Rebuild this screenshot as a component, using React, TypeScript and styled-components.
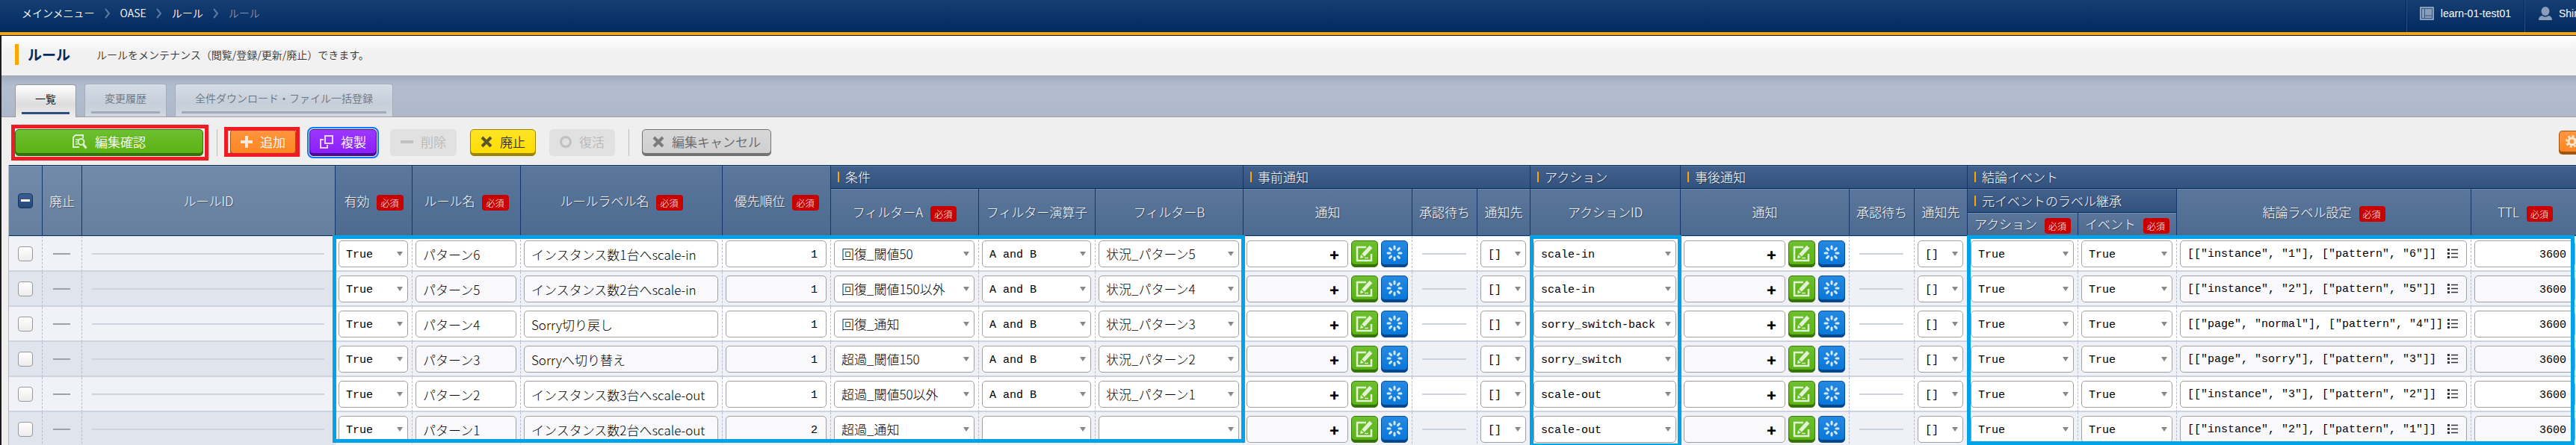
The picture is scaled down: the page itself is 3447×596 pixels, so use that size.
import React from "react";
import styled, { createGlobalStyle, css } from "styled-components";

const GlobalStyle = createGlobalStyle`
  * { box-sizing: border-box; }
  html, body { margin: 0; height: 100%; }
  body {
    overflow: hidden;
    background: #efefef;
    color: #000;
    font-family: "Noto Sans CJK JP", sans-serif;
    font-size: 14px;
    font-weight: 350;
  }
  button, input, select { font-family: inherit; font-weight: inherit; margin: 0; }
`;

const MONO = `"Liberation Mono", "Noto Sans CJK JP", monospace`;
const ACCENT = "#ffa500";

/* ---------- Header ---------- */

const Page = styled.div`
  height: 100vh;
  overflow: hidden;
  display: flex;
  flex-direction: column;
`;

const TopBar = styled.header`
  flex: none;
  display: flex;
  justify-content: space-between;
  height: 48px;
  border-bottom: 1px solid #111;
  background: linear-gradient(#163e72, #002b62 42px, #002b62 43px, ${ACCENT} 43px);
  color: #fff;
`;

const Breadcrumb = styled.nav`
  display: flex;
  align-items: center;
  gap: 12px;
  height: 33px;
  padding-left: 29px;
  line-height: 20px;
  svg { display: block; margin-top: 3px; }
`;

const Crumb = styled.a<{ $current?: boolean }>`
  color: ${(p) => (p.$current ? "#8395b0" : "#fff")};
  text-decoration: none;
`;

const Account = styled.div`
  display: flex;
  height: 43px;
`;

const AccountItem = styled.button<{ $cut?: boolean }>`
  display: flex;
  gap: 8px;
  padding: 8px 18px 0 17px;
  ${(p) => p.$cut && "width: 69px; padding-right: 0;"}
  overflow: hidden;
  white-space: nowrap;
  border: 0;
  border-left: 1px solid #2a4f80;
  box-shadow: -1px 0 #00265a;
  background: none;
  color: #fff;
  font-family: "Liberation Sans", sans-serif;
  font-size: 14px;
  line-height: 20px;
  svg { flex: none; }
`;

const Main = styled.main`
  flex: 1;
  min-height: 0;
  display: flex;
  flex-direction: column;
  border-left: 2px solid #1c1c1c;
`;

const TitleRow = styled.div`
  flex: none;
  display: flex;
  align-items: center;
  height: 53px;
  padding: 0 18px 3px;
  background: linear-gradient(#fff, #f1f1f1 22px);
`;

const Title = styled.h1`
  margin: 0 35px 0 0;
  padding-left: 12px;
  border-left: 5px solid ${ACCENT};
  color: #002b62;
  font-size: 19px;
  line-height: 28px;
`;

const Description = styled.p`
  margin: 0;
  color: #333;
  line-height: 28px;
`;

const Tabs = styled.div`
  flex: none;
  display: flex;
  align-items: flex-end;
  gap: 11px;
  height: 56px;
  padding-left: 18px;
  border-bottom: 1px solid #9b9f9f;
  background: linear-gradient(#9fabbb, #b3bdd0 14px, #adb9cb);
`;

const Tab = styled.button<{ $active?: boolean }>`
  height: 44px;
  padding: 0 8px 3px;
  border: 1px solid #a3adba;
  border-bottom: 0;
  border-radius: 4px 4px 0 0;
  background: linear-gradient(#d6dde7, #c6ced9 60%, #d2d8e1);
  color: #6c737d;
  font-size: 14px;
  line-height: 20px;
  span {
    display: block;
    padding: 6px 18px 8px;
    border-bottom: 3px solid #a1abba;
  }
  ${(p) =>
    p.$active &&
    css`
      margin-bottom: -1px;
      border-color: #999;
      background: linear-gradient(#fff, #dcdcdc 60%, #efefef);
      color: #000;
      span { border-color: #2d4f80; }
    `}
`;

/* ---------- Toolbar ---------- */

const Toolbar = styled.div`
  flex: none;
  display: flex;
  align-items: center;
  gap: 18px;
  height: 64px;
  padding: 4px 0 0 18px;
`;

const Divider = styled.span`
  width: 1px;
  height: 36px;
  margin: 0 -1px 0 0;
  background: #bbb;
`;

type Tone = "green" | "orange" | "purple" | "yellow" | "gray" | "disabled";

const tones: Record<Tone, [string, string, string, string]> = {
  green: ["#6dbf30", "#59b210", "#35700a", "#fff"],
  orange: ["#ff963f", "#ff8420", "#a1540f", "#fff"],
  purple: ["#9c38ff", "#8b1cff", "#4a0a94", "#fff"],
  yellow: ["#ffe426", "#ffdc00", "#9b8600", "#333"],
  gray: ["#d7d7d7", "#cfcfcf", "#737373", "#666"],
  disabled: ["#e1e1e1", "#e1e1e1", "#e1e1e1", "#b9b9b9"],
};

const ToolButton = styled.button<{ $tone: Tone; $wide?: boolean }>`
  flex: none;
  display: flex;
  align-items: center;
  justify-content: center;
  gap: 10px;
  width: ${(p) => (p.$wide ? "252px" : "auto")};
  height: 36px;
  padding: 0 13px 3px;
  border: 1px solid ${(p) => tones[p.$tone][2]};
  border-radius: 5px;
  background: linear-gradient(${(p) => tones[p.$tone][0]}, ${(p) => tones[p.$tone][1]});
  box-shadow: inset 0 -3px ${(p) => tones[p.$tone][2]};
  color: ${(p) => tones[p.$tone][3]};
  font-size: 17px;
  line-height: 24px;
  white-space: nowrap;
  svg { opacity: 0.8; flex: none; }
  ${(p) => p.$tone === "disabled" && "box-shadow: none;"}
`;

const FocusRing = styled.span`
  display: flex;
  border-radius: 5px;
  outline: 2px solid #0a78ff;
  outline-offset: 1px;
`;

const Marked = styled.span`
  position: relative;
  display: flex;
`;

/* Annotation frame drawn over the controls it points out. */
const Mark = styled.span<{ $inset: string }>`
  position: absolute;
  inset: ${(p) => p.$inset};
  border: 5px solid #ed1c24;
  pointer-events: none;
`;

const SettingsButton = styled(ToolButton)`
  justify-content: flex-start;
  width: 23px;
  height: 32px;
  margin-left: auto;
  padding: 0 0 3px 8px;
  border-right: 0;
  border-radius: 5px 0 0 5px;
  overflow: hidden;
`;

/* ---------- Table ---------- */

const TableArea = styled.div`
  position: relative;
  flex: 1;
  min-height: 0;
  overflow: hidden;
  margin-left: 9px;
  border-left: 1px solid #bbb;
`;

const Frame = styled.div<{ $left: number; $width: number; $height: number }>`
  position: absolute;
  top: 94px;
  left: ${(p) => p.$left}px;
  width: ${(p) => p.$width}px;
  height: ${(p) => p.$height}px;
  border: 5px solid #00a2e8;
  pointer-events: none;
`;

const Table = styled.table`
  width: 3440px;
  table-layout: fixed;
  border-collapse: separate;
  border-spacing: 0;
  border-top: 1px solid #002d62;
`;

const HeadRow = styled.tr<{ $height: number }>`
  height: ${(p) => p.$height}px;
`;

const HeadCell = styled.th<{ $pale?: boolean }>`
  padding: 0;
  border-right: 1px solid #12376c;
  border-bottom: 1px solid #002d62;
  background: ${(p) =>
    p.$pale ? "linear-gradient(#728ba9, #667f9f)" : "linear-gradient(#5b779b, #4d6a90)"};
  box-shadow: inset 0 1px rgba(255, 255, 255, 0.15);
  color: #fff;
  font-size: 17px;
  font-weight: 300;
  line-height: 24px;
  text-shadow: 1px 1px 1px rgba(0, 0, 0, 0.4);
  white-space: nowrap;
`;

const GroupCell = styled(HeadCell)`
  background: linear-gradient(#42618b, #33527e);
  text-align: left;
`;

const GroupLabel = styled.span`
  display: flex;
  align-items: center;
  gap: 8px;
  padding-left: 9px;
  &::before {
    content: "";
    width: 2px;
    height: 14px;
    background: ${ACCENT};
  }
`;

const HeadLabel = styled.span`
  display: flex;
  align-items: center;
  justify-content: center;
  gap: 10px;
`;

const Required = styled.span`
  margin-top: 5px;
  padding: 0 6px 0 5px;
  border-radius: 4px;
  background: #c80000;
  font-size: 12px;
  line-height: 21px;
  text-shadow: none;
`;

const Cell = styled.td<{ $fixed?: boolean }>`
  height: 47px;
  padding: 5px 5px 4px 4px;
  border-right: 1px dashed #b3bdd0;
  border-bottom: 2px solid #cdd4e0;
  background: ${(p) => (p.$fixed ? "#f0f2f7" : "#fff")};
`;

const BodyRow = styled.tr`
  &:first-child > td { height: 48px; border-top: 1px solid #cdd4e0; }
  &:nth-child(even) > td { background: #f0f1f6; }
  &:nth-child(even) > ${Cell}:nth-child(-n + 3) { background: #e0e5ed; }
`;

const CheckCell = styled(Cell)`
  padding: 0;
  text-align: center;
  vertical-align: middle;
`;

const Check = styled.input`
  appearance: none;
  display: block;
  width: 20px;
  height: 20px;
  margin: 0 auto;
  border: 1px solid #999;
  border-radius: 4px;
  background: linear-gradient(#fff, #ececec);
`;

const CheckAll = styled(Check)`
  border-color: #0f3468;
  background:
    linear-gradient(#fff, #fff) center / 12px 3px no-repeat,
    linear-gradient(#3b6090, #244878);
`;

const EmptyMark = styled.hr<{ $dark?: boolean }>`
  height: 2px;
  margin: 0 ${(p) => (p.$dark ? 10 : 9)}px;
  border: 0;
  background: ${(p) => (p.$dark ? "#9da1a8" : "#cdd4e0")};
`;

const field = css`
  display: block;
  width: 100%;
  height: 36px;
  border: 1px solid #a0a0a0;
  border-radius: 5px;
  background: #fff;
  color: #000;
`;

const fieldText = css<{ $ascii: boolean }>`
  font-family: ${(p) => (p.$ascii ? MONO : `"Noto Sans CJK JP", sans-serif`)};
  font-size: ${(p) => (p.$ascii ? 15 : 17)}px;
  font-weight: ${(p) => (p.$ascii ? 400 : 300)};
`;

const TextField = styled.input<{ $ascii: boolean; $right?: boolean }>`
  ${field}
  ${fieldText}
  padding: ${(p) => (p.$ascii ? 2 : 0)}px 11px 0 9px;
  text-align: ${(p) => (p.$right ? "right" : "left")};
  tr:nth-child(even) & { background: #f9f9fb; }
`;

const SelectBox = styled.span`
  position: relative;
  display: block;
  svg {
    position: absolute;
    top: 15px;
    right: 7px;
    pointer-events: none;
  }
`;

const SelectField = styled.select<{ $ascii: boolean }>`
  ${field}
  ${fieldText}
  appearance: none;
  padding: ${(p) => (p.$ascii ? "2px 18px 0 9px" : "0 18px 2px 9px")};
`;

const Notice = styled.div`
  display: flex;
  gap: 4px;
`;

const NoticeBox = styled.button`
  ${field}
  flex: 1;
  padding: 0 10px 0 0;
  font-family: Inter, sans-serif;
  font-size: 22px;
  font-weight: 700;
  line-height: 24px;
  text-align: right;
  tr:nth-child(even) & { background: #f9f9fb; }
`;

const IconButton = styled.button<{ $blue?: boolean }>`
  flex: none;
  display: flex;
  justify-content: center;
  width: 36px;
  height: 36px;
  padding: 4px 0 0;
  border: 1px solid ${(p) => (p.$blue ? "#0a4f96" : "#3a7a0c")};
  border-radius: 5px;
  background: ${(p) =>
    p.$blue ? "linear-gradient(#2589e2, #0676d8)" : "linear-gradient(#6dbf30, #59b210)"};
  box-shadow: inset 0 -3px ${(p) => (p.$blue ? "#04468a" : "#35700a")};
`;

const JsonBox = styled.div`
  ${field}
  display: flex;
  align-items: center;
  padding-right: 10px;
  tr:nth-child(even) & { background: #f9f9fb; }
  input {
    flex: 1;
    min-width: 0;
    padding: 0 0 0 9px;
    border: 0;
    background: none;
    font-family: ${MONO};
    font-size: 15px;
  }
`;

/* ---------- Icons ---------- */

const Chevron = () => (
  <svg width="10" height="14" viewBox="0 0 10 14" fill="none" stroke="#5f7aa0" strokeWidth="2">
    <path d="M2 1l5 6-5 6" />
  </svg>
);

const WorkspaceIcon = () => (
  <svg width="20" height="20" viewBox="0 0 20 20">
    <rect x="0" y="1" width="19" height="18" rx="1" fill="#8b9db8" />
    <path d="M2.500 3.500h14v13h-14zM6.500 3.500v13M6.500 13h10" fill="none" stroke="#335784" />
  </svg>
);

const UserIcon = () => (
  <svg width="20" height="20" viewBox="0 0 20 20" fill="#8b9db8">
    <ellipse cx="10" cy="7" rx="5.500" ry="6" />
    <path d="M1 19c0-4 2-5.500 5-6 2 2 6 2 8 0 3 .5 5 2 5 6z" />
  </svg>
);

const ConfirmIcon = () => (
  <svg width="20" height="20" viewBox="0 0 20 20" fill="none" stroke="#fff" strokeWidth="2">
    <path d="M14 5V1H4L1 4v13h8" />
    <path d="M4 7h4M4 10h2M4 13h3" strokeWidth="1.500" />
    <circle cx="11.500" cy="10" r="4" />
    <path d="M14.500 13.500l4 5" strokeWidth="3" />
  </svg>
);

const PlusIcon = () => (
  <svg width="16" height="16" viewBox="0 0 16 16" stroke="currentColor" strokeWidth="4">
    <path d="M8 0v16M0 8h16" />
  </svg>
);

const CopyIcon = () => (
  <svg width="18" height="18" viewBox="0 0 18 18" fill="none" stroke="#fff" strokeWidth="2">
    <path d="M7 1h10v10H7zM5 6H1v11h9v-4" />
  </svg>
);

const MinusIcon = () => (
  <svg width="17" height="16" viewBox="0 0 17 16" stroke="currentColor" strokeWidth="4">
    <path d="M0 8h17" />
  </svg>
);

const CrossIcon = () => (
  <svg width="16" height="16" viewBox="0 0 16 16" stroke="currentColor" strokeWidth="4">
    <path d="M2 2l12 12M14 2L2 14" />
  </svg>
);

const CircleIcon = () => (
  <svg width="16" height="16" viewBox="0 0 16 16" fill="none" stroke="currentColor" strokeWidth="3">
    <circle cx="8" cy="8" r="6.500" />
  </svg>
);

const GearIcon = () => (
  <svg width="17" height="17" viewBox="0 0 17 17" fill="none" stroke="#fff">
    <circle cx="8.500" cy="8.500" r="4.500" strokeWidth="3" />
    <circle cx="8.500" cy="8.500" r="7" strokeWidth="3" strokeDasharray="2.750 2.750" />
  </svg>
);

const ArrowIcon = () => (
  <svg width="8" height="6" viewBox="0 0 8 6" fill="#888">
    <path d="M0 0h8L4 6z" />
  </svg>
);

const EditIcon = () => (
  <svg width="24" height="24" viewBox="0 0 24 24" fill="none" stroke="#e2f3d5">
    <path d="M14 4H2v18h19v-9" strokeWidth="2.500" />
    <path d="M10 15L20.500 3.500" strokeWidth="5" />
    <path d="M6 19l1-5 4 4z" fill="#e2f3d5" stroke="none" />
    <path d="M12 18.500h5" strokeWidth="1.500" />
  </svg>
);

const SpinnerIcon = () => (
  <svg width="24" height="24" viewBox="0 0 24 24" stroke="#d5e9fb" strokeWidth="3" strokeLinecap="round">
    <path d="M12 3v3M12 18v3M3 12h3M18 12h3M5.600 5.600l2 2M16.400 16.400l2 2M5.600 18.400l2-2M16.400 7.600l2-2" />
  </svg>
);

const ListIcon = () => (
  <svg width="16" height="14" viewBox="0 0 16 14" stroke="#333" fill="#333">
    <path d="M6 1.500h9M6 6.500h9M6 11.500h9" strokeWidth="1.500" />
    <path d="M1 1.500h3M1 6.500h3M1 11.500h3" strokeWidth="3" />
  </svg>
);

/* ---------- Data ---------- */

const columnWidths = [
  45, 53, 339, 103, 145, 270, 145, 198, 156, 198, 226, 87, 71, 201, 226, 87, 71, 148, 132, 394, 145,
];

type Rule = {
  name: string;
  label: string;
  priority: string;
  filterA: string;
  operator: string;
  filterB: string;
  action: string;
  conclusion: string;
};

const rules: Rule[] = [
  { name: "パターン6", label: "インスタンス数1台へscale-in", priority: "1", filterA: "回復_閾値50", operator: "A and B", filterB: "状況_パターン5", action: "scale-in", conclusion: '[["instance", "1"], ["pattern", "6"]]' },
  { name: "パターン5", label: "インスタンス数2台へscale-in", priority: "1", filterA: "回復_閾値150以外", operator: "A and B", filterB: "状況_パターン4", action: "scale-in", conclusion: '[["instance", "2"], ["pattern", "5"]]' },
  { name: "パターン4", label: "Sorry切り戻し", priority: "1", filterA: "回復_通知", operator: "A and B", filterB: "状況_パターン3", action: "sorry_switch-back", conclusion: '[["page", "normal"], ["pattern", "4"]]' },
  { name: "パターン3", label: "Sorryへ切り替え", priority: "1", filterA: "超過_閾値150", operator: "A and B", filterB: "状況_パターン2", action: "sorry_switch", conclusion: '[["page", "sorry"], ["pattern", "3"]]' },
  { name: "パターン2", label: "インスタンス数3台へscale-out", priority: "1", filterA: "超過_閾値50以外", operator: "A and B", filterB: "状況_パターン1", action: "scale-out", conclusion: '[["instance", "3"], ["pattern", "2"]]' },
  { name: "パターン1", label: "インスタンス数2台へscale-out", priority: "2", filterA: "超過_通知", operator: "", filterB: "", action: "scale-out", conclusion: '[["instance", "2"], ["pattern", "1"]]' },
];

const isAscii = (s: string) => /^[\x20-\x7e]*$/.test(s);

/* ---------- Table parts ---------- */

const Head = (p: { text: string; required?: boolean; pale?: boolean; rows?: number }) => (
  <HeadCell scope="col" rowSpan={p.rows} $pale={p.pale}>
    <HeadLabel>
      {p.text}
      {p.required && <Required>必須</Required>}
    </HeadLabel>
  </HeadCell>
);

const Group = (p: { text: string; span: number }) => (
  <GroupCell scope="colgroup" colSpan={p.span}>
    <GroupLabel>{p.text}</GroupLabel>
  </GroupCell>
);

const SelectCell = (p: { label: string; value: string }) => (
  <Cell>
    <SelectBox>
      <SelectField aria-label={p.label} $ascii={isAscii(p.value)} defaultValue={p.value}>
        <option value={p.value}>{p.value}</option>
      </SelectField>
      <ArrowIcon />
    </SelectBox>
  </Cell>
);

const InputCell = (p: { label: string; value: string; right?: boolean }) => (
  <Cell>
    <TextField aria-label={p.label} $ascii={isAscii(p.value)} $right={p.right} defaultValue={p.value} />
  </Cell>
);

const NoticeCells = (p: { label: string }) => (
  <>
    <Cell>
      <Notice>
        <NoticeBox aria-label={`${p.label} 追加`}>+</NoticeBox>
        <IconButton aria-label={`${p.label} 編集`}><EditIcon /></IconButton>
        <IconButton $blue aria-label={`${p.label} 更新`}><SpinnerIcon /></IconButton>
      </Notice>
    </Cell>
    <Cell><EmptyMark /></Cell>
    <SelectCell label={`${p.label} 通知先`} value="[]" />
  </>
);

export default function App() {
  return (
    <Page>
      <GlobalStyle />
      <TopBar>
        <Breadcrumb>
          <Crumb href="#menu">メインメニュー</Crumb>
          <Chevron />
          <Crumb href="#oase">OASE</Crumb>
          <Chevron />
          <Crumb href="#rules">ルール</Crumb>
          <Chevron />
          <Crumb href="#rule" $current>ルール</Crumb>
        </Breadcrumb>
        <Account>
          <AccountItem><WorkspaceIcon />learn-01-test01</AccountItem>
          <AccountItem $cut><UserIcon />Shin</AccountItem>
        </Account>
      </TopBar>
      <Main>
        <TitleRow>
          <Title>ルール</Title>
          <Description>ルールをメンテナンス（閲覧/登録/更新/廃止）できます。</Description>
        </TitleRow>
        <Tabs role="tablist">
          <Tab role="tab" aria-selected $active><span>一覧</span></Tab>
          <Tab role="tab"><span>変更履歴</span></Tab>
          <Tab role="tab"><span>全件ダウンロード・ファイル一括登録</span></Tab>
        </Tabs>
        <Toolbar>
          <Marked>
            <ToolButton $tone="green" $wide><ConfirmIcon />編集確認</ToolButton>
            <Mark $inset="-6px -7px -6px -5px" />
          </Marked>
          <Divider />
          <Marked>
            <ToolButton $tone="orange"><PlusIcon />追加</ToolButton>
            <Mark $inset="-3px -5px -1px -8px" />
          </Marked>
          <FocusRing>
            <ToolButton $tone="purple"><CopyIcon />複製</ToolButton>
          </FocusRing>
          <ToolButton $tone="disabled" disabled><MinusIcon />削除</ToolButton>
          <ToolButton $tone="yellow"><CrossIcon />廃止</ToolButton>
          <ToolButton $tone="disabled" disabled><CircleIcon />復活</ToolButton>
          <Divider />
          <ToolButton $tone="gray"><CrossIcon />編集キャンセル</ToolButton>
          <SettingsButton $tone="orange" aria-label="設定"><GearIcon /></SettingsButton>
        </Toolbar>
        <TableArea>
          <Table>
            <colgroup>
              {columnWidths.map((w, i) => <col key={i} width={w} />)}
            </colgroup>
            <thead>
              <HeadRow $height={31}>
                <HeadCell rowSpan={3} $pale>
                  <CheckAll type="checkbox" aria-label="すべて選択" />
                </HeadCell>
                <Head text="廃止" rows={3} pale />
                <Head text="ルールID" rows={3} pale />
                <Head text="有効" rows={3} required />
                <Head text="ルール名" rows={3} required />
                <Head text="ルールラベル名" rows={3} required />
                <Head text="優先順位" rows={3} required />
                <Group text="条件" span={3} />
                <Group text="事前通知" span={3} />
                <Group text="アクション" span={1} />
                <Group text="事後通知" span={3} />
                <Group text="結論イベント" span={4} />
              </HeadRow>
              <HeadRow $height={32}>
                <Head text="フィルターA" rows={2} required />
                <Head text="フィルター演算子" rows={2} />
                <Head text="フィルターB" rows={2} />
                <Head text="通知" rows={2} />
                <Head text="承認待ち" rows={2} />
                <Head text="通知先" rows={2} />
                <Head text="アクションID" rows={2} />
                <Head text="通知" rows={2} />
                <Head text="承認待ち" rows={2} />
                <Head text="通知先" rows={2} />
                <Group text="元イベントのラベル継承" span={2} />
                <Head text="結論ラベル設定" rows={2} required />
                <Head text="TTL" rows={2} required />
              </HeadRow>
              <HeadRow $height={31}>
                <Head text="アクション" required />
                <Head text="イベント" required />
              </HeadRow>
            </thead>
            <tbody>
              {rules.map((r) => (
                <BodyRow key={r.name}>
                  <CheckCell $fixed>
                    <Check type="checkbox" aria-label={`${r.name} 選択`} />
                  </CheckCell>
                  <Cell $fixed><EmptyMark $dark /></Cell>
                  <Cell $fixed><EmptyMark /></Cell>
                  <SelectCell label="有効" value="True" />
                  <InputCell label="ルール名" value={r.name} />
                  <InputCell label="ルールラベル名" value={r.label} />
                  <InputCell label="優先順位" value={r.priority} right />
                  <SelectCell label="フィルターA" value={r.filterA} />
                  <SelectCell label="フィルター演算子" value={r.operator} />
                  <SelectCell label="フィルターB" value={r.filterB} />
                  <NoticeCells label="事前通知" />
                  <SelectCell label="アクションID" value={r.action} />
                  <NoticeCells label="事後通知" />
                  <SelectCell label="アクション" value="True" />
                  <SelectCell label="イベント" value="True" />
                  <Cell>
                    <JsonBox>
                      <input aria-label="結論ラベル設定" defaultValue={r.conclusion} />
                      <ListIcon />
                    </JsonBox>
                  </Cell>
                  <InputCell label="TTL" value="3600" right />
                </BodyRow>
              ))}
            </tbody>
          </Table>
          <Frame $left={433} $width={1221} $height={278} />
          <Frame $left={2035} $width={203} $height={284} />
          <Frame $left={2620} $width={813} $height={281} />
        </TableArea>
      </Main>
    </Page>
  );
}
